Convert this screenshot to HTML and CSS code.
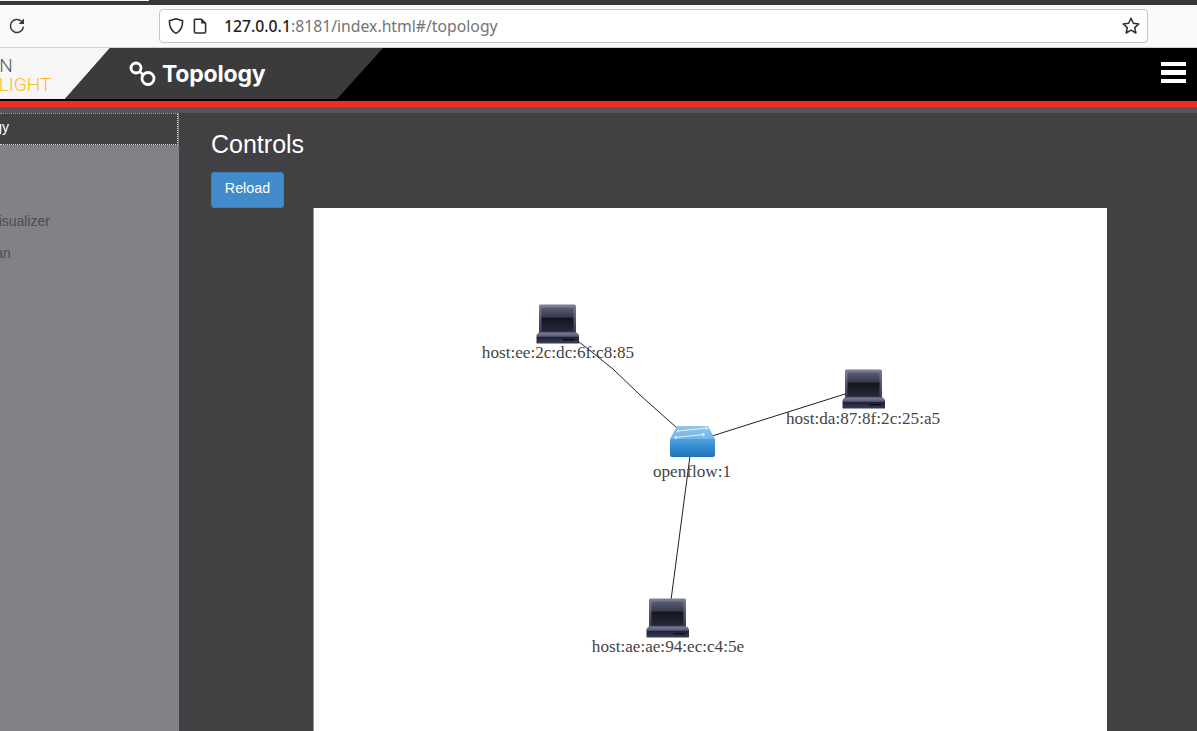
FILE: index.html
```html
<!DOCTYPE html>
<html lang="en">
<head>
<meta charset="utf-8">
<title>Topology</title>
<link rel="stylesheet" href="styles.css">
</head>
<body>
<div class="tabstrip"><div class="tab-edge"></div></div>
<div class="toolbar">
  <svg class="reload" width="18" height="18" viewBox="0 0 18 18"><path d="M15.400 9.600A6.500 6.500 0 1 1 13.400 4.300L15 5.900" fill="none" stroke="#3b3b3d" stroke-width="1.500"/><path d="M16 1.600V7H10.600Z" fill="#3b3b3d"/></svg>
  <div class="urlbar">
    <svg class="ic-shield" width="18" height="18" viewBox="0 0 18 18"><path d="M9 1.800L15.600 3.800C15.800 9.500 13.800 13.900 9 16.400C4.200 13.900 2.200 9.500 2.400 3.800Z" fill="none" stroke="#2e2e32" stroke-width="1.600" stroke-linejoin="round"/></svg>
    <svg class="ic-page" width="16" height="18" viewBox="0 0 16 18"><path d="M3 2.200H9.400L13.600 6.400V14.600A1.400 1.400 0 0 1 12.200 16H3.800A1.400 1.400 0 0 1 2.400 14.600V2.800Z" fill="none" stroke="#2e2e32" stroke-width="1.600" stroke-linejoin="round"/><path d="M9.200 2.400V6.600H13.400Z" fill="#2e2e32"/></svg>
    <div class="url"><b>127.0.0.1</b>:8181/index.html#/topology</div>
    <svg class="ic-star" width="20" height="20" viewBox="0 0 20 20"><path d="M10 2.200L12.300 7.300L17.800 7.900L13.700 11.600L14.900 17L10 14.200L5.100 17L6.300 11.600L2.200 7.900L7.700 7.300Z" fill="none" stroke="#2e2e32" stroke-width="1.500" stroke-linejoin="round"/></svg>
  </div>
</div>
<header class="appbar">
  <div class="brand"><div class="brand-text">OPEN<br><span class="brand-accent">DAYLIGHT</span></div></div>
  <div class="title-panel">
    <svg class="title-icon" width="30" height="30" viewBox="0 0 30 30"><circle cx="8" cy="7" r="5" fill="none" stroke="#fff" stroke-width="2.800"/><circle cx="20" cy="17.500" r="6" fill="none" stroke="#fff" stroke-width="2.800"/><path d="M11.500 10.500L15.500 14" stroke="#fff" stroke-width="2.800"/></svg>
    <h1 class="title">Topology</h1>
  </div>
  <div class="burger"><span></span><span></span><span></span></div>
</header>
<div class="redbar"></div>
<div class="greybar"></div>
<main class="layout">
  <nav class="sidebar">
    <div class="item active"><span>Topology</span></div>
    <div class="items">
      <div class="item"><span>Nodes</span></div>
      <div class="item"><span>YangUI</span></div>
      <div class="item"><span>Yang Visualizer</span></div>
      <div class="item"><span>Yangman</span></div>
    </div>
  </nav>
  <section class="content">
    <h2 class="heading">Controls</h2>
    <button class="btn">Reload</button>
    <div class="canvas">
      <svg class="graph" width="793" height="523" viewBox="314 208 793 523">
        <defs>
          <linearGradient id="lapBody" x1="0" y1="0" x2="0" y2="1"><stop offset="0" stop-color="#7d8198"/><stop offset=".5" stop-color="#555970"/><stop offset="1" stop-color="#3a3d55"/></linearGradient>
          <linearGradient id="lapScreen" x1="0" y1="0" x2="0" y2="1"><stop offset="0" stop-color="#5a5d70"/><stop offset=".4" stop-color="#383a4c"/><stop offset=".44" stop-color="#14151e"/><stop offset="1" stop-color="#262838"/></linearGradient>
          <linearGradient id="lapBase" x1="0" y1="0" x2="0" y2="1"><stop offset="0" stop-color="#7c80a0"/><stop offset=".35" stop-color="#565a78"/><stop offset=".42" stop-color="#1e2030"/><stop offset="1" stop-color="#3a3d55"/></linearGradient>
          <linearGradient id="swFront" x1="0" y1="0" x2="0" y2="1"><stop offset="0" stop-color="#4fa0de"/><stop offset=".55" stop-color="#2f86cc"/><stop offset="1" stop-color="#2172b8"/></linearGradient>
          <linearGradient id="swTop" x1="0" y1="0" x2="0" y2="1"><stop offset="0" stop-color="#8fc3ea"/><stop offset="1" stop-color="#74b4e6"/></linearGradient>
          <g id="laptop">
            <path d="M3 2Q3 .5 4.500 .5H38.500Q40 .5 40 2V29H3Z" fill="url(#lapBody)"/>
            <rect x="5.500" y="3.500" width="32" height="24" fill="url(#lapScreen)"/>
            <path d="M2.500 28.500H41L43 31V39.500H.5V31Z" fill="url(#lapBase)"/>
            <rect x="27" y="35" width="12" height="1.400" fill="#0c0d14"/>
          </g>
        </defs>
        <g class="edges">
          <polyline points="578,341 613,369 640,395 677,428"/>
          <line x1="712" y1="436" x2="845" y2="394"/>
          <line x1="690" y1="456" x2="671" y2="600"/>
        </g>
        <use href="#laptop" x="536" y="304"/>
        <use href="#laptop" x="842" y="369"/>
        <use href="#laptop" x="646" y="598"/>
        <g>
          <path d="M677 426H708L715 439H670Z" fill="url(#swTop)"/>
          <path d="M670 439H715V455Q715 457 713 457H672Q670 457 670 455Z" fill="url(#swFront)"/>
          <path d="M678 431L707 428M705 426.800L708 428L705.500 430M679 429.800L677 431L679 432.500M675 437.500L704 434.500M702 433.300L705 434.500L702.500 436.300M677 436L674.500 437.500L677 439" fill="none" stroke="#eaf5fd" stroke-width=".9"/>
        </g>
        <text class="label" x="558" y="357.500">host:ee:2c:dc:6f:c8:85</text>
        <text class="label" x="863" y="423.500">host:da:87:8f:2c:25:a5</text>
        <text class="label" x="692" y="476.500">openflow:1</text>
        <text class="label" x="668" y="651.500">host:ae:ae:94:ec:c4:5e</text>
      </svg>
    </div>
  </section>
</main>
</body>
</html>
```
FILE: styles.css
```css
* { box-sizing: border-box; }
html, body { margin: 0; height: 100%; overflow: hidden; }
body { display: flex; flex-direction: column; background: #414042; font-family: "Liberation Sans", sans-serif; }

.tabstrip { height: 5px; background: #38383a; flex: none; }
.tab-edge { width: 149px; height: 1px; background: #f4f4f4; }

.toolbar { height: 43px; flex: none; background: #f9f9fa; display: flex; align-items: center; padding-left: 8px; border-bottom: 1px solid #d0d0d2; }
.reload { flex: none; }
.urlbar { margin-left: 133px; width: 989px; height: 34px; background: #fff; border: 1px solid #c4c4c6; border-radius: 4px; display: flex; align-items: center; padding: 0 6px 0 7px; }
.ic-shield { flex: none; }
.ic-page { flex: none; margin-left: 7px; }
.url { margin-left: 16px; flex: 1; font: 15.750px "Noto Sans", sans-serif; color: #737378; white-space: nowrap; }
.url b { font-weight: 500; color: #1c1c20; }
.ic-star { flex: none; }

.appbar { height: 53px; flex: none; background: #000; display: flex; align-items: stretch; position: relative; padding-bottom: 2px; }
.brand { width: 110px; flex: none; background: #f6f6f6; clip-path: polygon(0 0, 100% 0, 65px 100%, 0 100%); overflow: hidden; }
.brand-text { margin: 8px 0 0 -36px; font: 300 19px/19px Roboto, sans-serif; color: #58585a; white-space: nowrap; }
.brand-accent { color: #fdb92c; }
.title-panel { width: 318px; margin-left: -45px; flex: none; background: #3b3b3d; clip-path: polygon(45px 0, 100% 0, 272px 100%, 0 100%); display: flex; align-items: center; padding-left: 63px; }
.title-icon { flex: none; margin: 0 0 -5px 0; }
.title { margin: 0 0 0 4px; font: 700 23px Inter, sans-serif; letter-spacing: -.2px; color: #fff; }
.burger { margin: 0 11px 2px auto; width: 25px; display: flex; flex-direction: column; justify-content: center; gap: 4px; }
.burger span { height: 4.500px; background: #fff; }

.redbar { height: 6px; flex: none; background: #f02d23; }
.greybar { height: 6px; flex: none; background: #555557; }

.layout { flex: 1; min-height: 0; display: grid; grid-template-columns: 179px 1fr; }

.sidebar { background: #808285; overflow: hidden; }
.item { height: 26px; font: 14px/24px "Liberation Sans", sans-serif; color: #4d4d50; white-space: nowrap; word-spacing: 2px; }
.item span { display: block; margin-left: -48px; }
.item.active { height: 32px; background: #414042; color: #fff; border-bottom: 1px dotted #d8d8d8; border-right: 1px dotted #d8d8d8; border-top: 1px dotted #9a9a9c; margin: 0 1px 0 0; line-height: 26px; }
.item.active span { margin-left: -47px; }
.items { display: flex; flex-direction: column; gap: 6px; }

.content { padding: 0 0 0 32px; overflow: hidden; }
.heading { margin: 16px 0 0; font: 400 25px/30px "Liberation Sans", sans-serif; color: #fff; }
.btn { display: block; margin-top: 13px; width: 73px; height: 36px; padding: 0 0 4px; background: #428bca; border: 1px solid #3b80bd; border-radius: 3px; color: #fff; font: 14.300px "Liberation Sans", sans-serif; }
.canvas { margin: 0 0 0 103px; width: 793px; height: 523px; background: #fff; box-shadow: -1px 0 0 #9a9a9c; }
.graph { display: block; }
.edges { stroke: #222; stroke-width: 1; fill: none; }
.label { font: 17.150px "Liberation Serif", serif; fill: #444; text-anchor: middle; }
```
